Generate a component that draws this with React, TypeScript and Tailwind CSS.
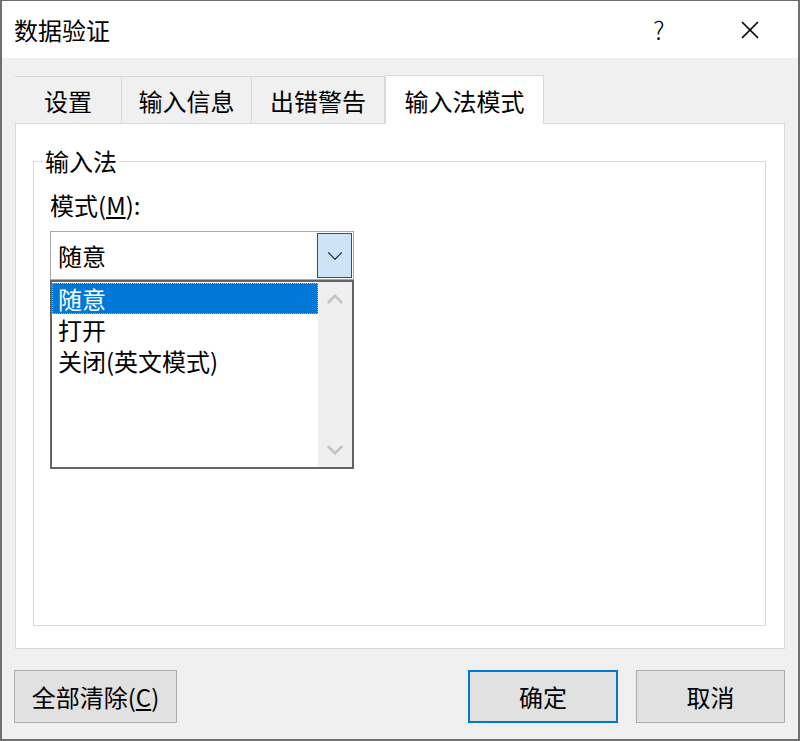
import { ChevronDown, ChevronUp, X } from "lucide-react";

const font = { fontFamily: '"Noto Sans CJK SC", "Noto Sans", sans-serif' };

const tabs = ["设置", "输入信息", "出错警告"];

export default function App() {
  return (
    <div
      style={font}
      className="flex h-[741px] w-[800px] flex-col border-x-2 border-b-2 border-t border-[#6f6f6f] bg-[#f0f0f0] text-[24px] leading-none text-black"
    >
      {/* title bar */}
      <div className="flex h-[57px] shrink-0 items-center bg-white pl-[12px]">
        <span className="flex-1 text-[24px]">数据验证</span>
        <span className="w-[86px] text-center text-[25px] font-light">?</span>
        <span className="flex w-[96px] items-center justify-center">
          <X size={30} strokeWidth={1.4} />
        </span>
      </div>

      <div className="flex flex-1 flex-col px-[13px] pt-[16px]">
        {/* tabs */}
        <div className="flex h-[49px] items-end">
          {tabs.map((t, i) => (
            <div
              key={t}
              className={`flex h-[47px] items-center justify-center border-t border-r border-[#d9d9d9] ${
                i === 0 ? "w-[107px] border-l-0" : i === 1 ? "w-[130px]" : "w-[133px]"
              }`}
            >
              <span className="mt-[2px]">{t}</span>
            </div>
          ))}
          <div className="relative z-10 -mb-px flex h-[49px] w-[159px] items-center justify-center border-x border-t border-[#d9d9d9] bg-white">
            <span className="mt-[2px]">输入法模式</span>
          </div>
        </div>

        {/* panel */}
        <div className="flex h-[526px] flex-col border border-[#d9d9d9] bg-white px-[17px] pb-[22px] pt-[24px] pr-[18px]">
          <fieldset className="flex flex-1 flex-col border border-[#d9d9d9]">
            <legend className="ml-[9px] px-[2px] text-[24px] leading-[26px]">输入法</legend>
            <div className="flex flex-col px-[16px]">
              <div className="mt-[19px]">
                模式(<span className="underline underline-offset-2">M</span>):
              </div>

              {/* combo */}
              <div className="mt-[14px] w-[304px]">
                <div className="flex h-[49px] border border-[#a8a8a8] bg-white">
                  <div className="flex flex-1 items-center pl-[7px]">随意</div>
                  <div className="m-px flex w-[35px] items-center justify-center border border-[#0c5a9e] bg-[#cce4f7]">
                    <ChevronDown size={26} strokeWidth={1.1} className="text-[#333]" />
                  </div>
                </div>
                <div className="flex h-[189px] border-2 border-[#646464] bg-white">
                  <div className="flex flex-1 flex-col pt-px leading-[29px]">
                    <div className="flex h-[31px] items-center border border-dotted border-[#e0a060] bg-[#0078d7] pl-[5px] text-white">
                      随意
                    </div>
                    <div className="flex h-[31px] items-center pl-[6px]">打开</div>
                    <div className="flex h-[31px] items-center pl-[6px]">关闭(英文模式)</div>
                  </div>
                  <div className="flex w-[34px] flex-col items-center justify-between bg-[#efefef] py-[4px]">
                    <ChevronUp size={26} strokeWidth={2.4} className="text-[#c4c4c4]" />
                    <ChevronDown size={26} strokeWidth={2.4} className="text-[#c4c4c4]" />
                  </div>
                </div>
              </div>
            </div>
          </fieldset>
        </div>

        {/* buttons */}
        <div className="mt-[21px] flex h-[53px] items-stretch">
          <button className="-ml-px flex w-[163px] items-center justify-center border border-[#adadad] bg-[#e1e1e1]">
            全部清除(<span className="underline underline-offset-2">C</span>)
          </button>
          <div className="flex-1" />
          <button className="flex w-[150px] items-center justify-center border-2 border-[#0078d7] bg-[#e1e1e1]">
            确定
          </button>
          <button className="ml-[18px] flex w-[149px] items-center justify-center border border-[#adadad] bg-[#e1e1e1]">
            取消
          </button>
        </div>
      </div>
    </div>
  );
}
